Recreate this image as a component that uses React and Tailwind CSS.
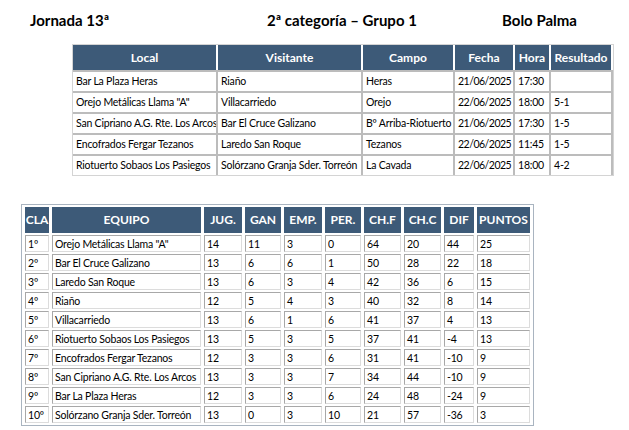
import React from "react";

const partidos = [
  ["Bar La Plaza Heras", "Riaño", "Heras", "21/06/2025", "17:30", ""],
  ['Orejo Metálicas Llama "A"', "Villacarriedo", "Orejo", "22/06/2025", "18:00", "5-1"],
  ["San Cipriano A.G. Rte. Los Arcos", "Bar El Cruce Galizano", "Bº Arriba-Riotuerto", "21/06/2025", "17:30", "1-5"],
  ["Encofrados Fergar Tezanos", "Laredo San Roque", "Tezanos", "22/06/2025", "11:45", "1-5"],
  ["Riotuerto Sobaos Los Pasiegos", "Solórzano Granja Sder. Torreón", "La Cavada", "22/06/2025", "18:00", "4-2"],
];

const clasificacion = [
  ["1º", 'Orejo Metálicas Llama "A"', "14", "11", "3", "0", "64", "20", "44", "25"],
  ["2º", "Bar El Cruce Galizano", "13", "6", "6", "1", "50", "28", "22", "18"],
  ["3º", "Laredo San Roque", "13", "6", "3", "4", "42", "36", "6", "15"],
  ["4º", "Riaño", "12", "5", "4", "3", "40", "32", "8", "14"],
  ["5º", "Villacarriedo", "13", "6", "1", "6", "41", "37", "4", "13"],
  ["6º", "Riotuerto Sobaos Los Pasiegos", "13", "5", "3", "5", "37", "41", "-4", "13"],
  ["7º", "Encofrados Fergar Tezanos", "12", "3", "3", "6", "31", "41", "-10", "9"],
  ["8º", "San Cipriano A.G. Rte. Los Arcos", "13", "3", "3", "7", "34", "44", "-10", "9"],
  ["9º", "Bar La Plaza Heras", "12", "3", "3", "6", "24", "48", "-24", "9"],
  ["10º", "Solórzano Granja Sder. Torreón", "13", "0", "3", "10", "21", "57", "-36", "3"],
];

const colsPartidos = [
  ["Local", "w-[145px]"],
  ["Visitante", "w-[145px]"],
  ["Campo", "w-[92px]"],
  ["Fecha", "w-[60px]"],
  ["Hora", "w-[36px]"],
  ["Resultado", "w-[62px]"],
];

const colsClas = [
  ["CLA", "w-[24px]"],
  ["EQUIPO", "w-[149px]"],
  ["JUG.", "w-[38px]"],
  ["GAN", "w-[36px]"],
  ["EMP.", "w-[38px]"],
  ["PER.", "w-[36px]"],
  ["CH.F", "w-[37px]"],
  ["CH.C", "w-[37px]"],
  ["DIF", "w-[30px]"],
  ["PUNTOS", "w-[53px]"],
];

export default function App() {
  return (
    <div className="w-[629px] h-[430px] bg-white text-black font-['Lato','Liberation_Sans',sans-serif]">
      {/* Cabecera */}
      <div className="flex pl-[30px] pt-[11px] h-[44px] text-[15px] font-bold leading-[18px]">
        <div className="w-[237px]">Jornada 13ª</div>
        <div className="w-[235px]">2ª categoría – Grupo 1</div>
        <div>Bolo Palma</div>
      </div>

      {/* Partidos */}
      <table className="ml-[72px] w-[541px] table-fixed border-separate border-spacing-0 border border-[#d4d4d4] text-[10.5px] tracking-[-0.2px]">
        <colgroup>
          {colsPartidos.map(([t, w]) => (
            <col key={t} className={w} />
          ))}
        </colgroup>
        <thead>
          <tr>
            {colsPartidos.map(([t]) => (
              <th
                key={t}
                className="h-[25px] bg-[#3d5a78] text-white font-bold text-[12px] tracking-normal text-center border-r-2 border-white p-0 overflow-hidden whitespace-nowrap"
              >
                {t}
              </th>
            ))}
          </tr>
        </thead>
        <tbody>
          {partidos.map((row, i) => (
            <tr key={i}>
              {row.map((c, j) => (
                <td
                  key={j}
                  className={
                    "h-[21px] px-[3px] py-0 whitespace-nowrap overflow-hidden border-t-2 border-r-2 border-[#bcbcbc] leading-none" +
                    (j === 3 ? " tracking-[-0.5px]" : "")
                  }
                >
                  {c}
                </td>
              ))}
            </tr>
          ))}
        </tbody>
      </table>

      {/* Clasificación */}
      <table className="ml-[21px] mt-[28px] w-[513px] table-fixed border-separate border-spacing-x-[3px] border-spacing-y-[2px] border border-[#a9b4c0] text-[10.5px] tracking-[-0.2px]">
        <colgroup>
          {colsClas.map(([t, w]) => (
            <col key={t} className={w} />
          ))}
        </colgroup>
        <thead>
          <tr>
            {colsClas.map(([t]) => (
              <th
                key={t}
                className="h-[26px] bg-[#3d5a78] text-white font-bold text-[12px] tracking-normal text-center p-0 overflow-hidden whitespace-nowrap"
              >
                {t}
              </th>
            ))}
          </tr>
        </thead>
        <tbody>
          {clasificacion.map((row, i) => (
            <tr key={i}>
              {row.map((c, j) => (
                <td
                  key={j}
                  className="h-[17px] px-[2px] pt-[2px] pb-0 whitespace-nowrap overflow-hidden border border-t-[#a8a8a8] border-l-[#a8a8a8] border-r-[#dcdcdc] border-b-[#dcdcdc] leading-none"
                >
                  {c}
                </td>
              ))}
            </tr>
          ))}
        </tbody>
      </table>
    </div>
  );
}
